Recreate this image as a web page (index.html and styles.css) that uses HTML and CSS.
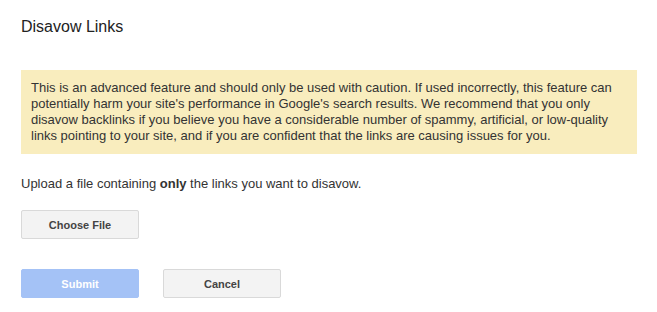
FILE: index.html
```html
<!DOCTYPE html>
<html>
<head>
<meta charset="utf-8">
<link rel="stylesheet" href="styles.css">
</head>
<body>
<div class="page">
  <h1 class="title">Disavow Links</h1>
  <div class="warning">This is an advanced feature and should only be used with caution. If used incorrectly, this feature can potentially harm your site's performance in Google's search results. We recommend that you only disavow backlinks if you believe you have a considerable number of spammy, artificial, or low-quality links pointing to your site, and if you are confident that the links are causing issues for you.</div>
  <p class="upload">Upload a file containing <b>only</b> the links you want to disavow.</p>
  <div class="file-row"><button class="btn">Choose File</button></div>
  <div class="actions">
    <button class="btn btn-primary">Submit</button>
    <button class="btn">Cancel</button>
  </div>
</div>
</body>
</html>
```
FILE: styles.css
```css
* { box-sizing: border-box; }
body {
  margin: 0;
  font-family: Arial, "Liberation Sans", sans-serif;
  color: #222;
  background: #fff;
}
.page {
  padding: 17px 20px 0 21px;
}
.title {
  margin: 0;
  font-size: 16px;
  font-weight: normal;
  line-height: 19px;
  color: #222;
}
.warning {
  margin-top: 34px;
  background: #f9edbe;
  padding: 10px 10px 10px 10px;
  font-size: 13px;
  line-height: 16px;
  color: #333;
  width: 616px;
}
.upload {
  margin: 22px 0 0 0;
  font-size: 13px;
  line-height: 16px;
  color: #333;
}
.file-row {
  margin-top: 18px;
}
.btn {
  width: 118px;
  height: 29px;
  font-family: Arial, "Liberation Sans", sans-serif;
  font-size: 11px;
  font-weight: bold;
  color: #444;
  background: #f3f3f3;
  border: 1px solid #d9d9d9;
  border-radius: 2px;
  padding: 0;
  margin: 0;
}
.actions {
  margin-top: 30px;
  display: flex;
  gap: 24px;
}
.btn-primary {
  background: #a4c2f6;
  border-color: #a4c2f6;
  color: #fff;
}
```
